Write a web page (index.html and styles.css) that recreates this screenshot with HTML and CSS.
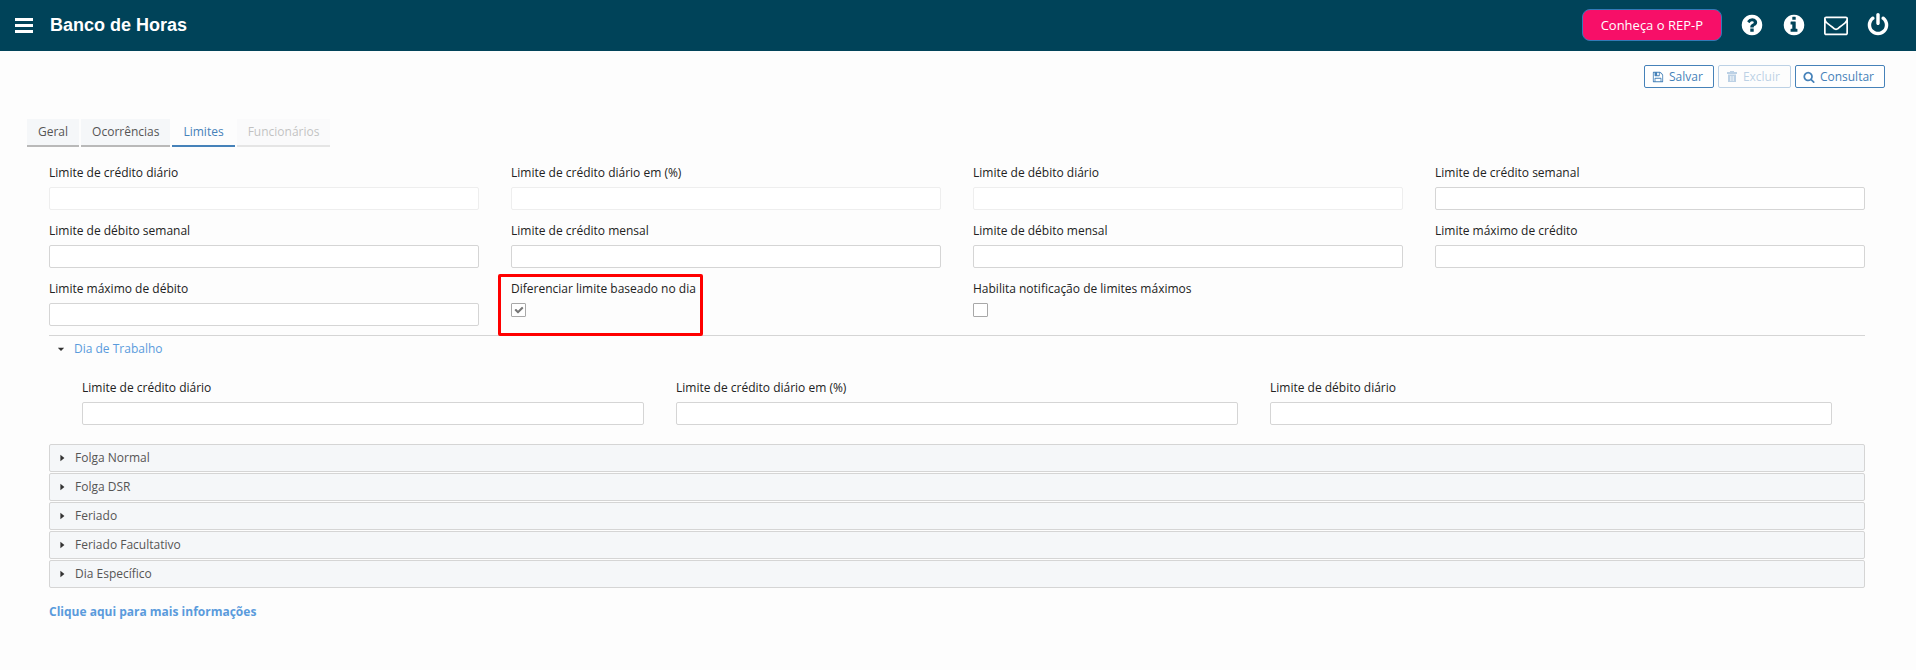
FILE: index.html
```html
<!DOCTYPE html>
<html lang="pt-BR">
<head>
    <meta charset="UTF-8">
    <meta name="viewport" content="width=device-width, initial-scale=1.0">
    <title>Banco de Horas</title>
    <link rel="stylesheet" href="styles.css">
</head>
<body>

    <!-- Header -->
    <header class="topbar">
        <button type="button" class="icon-btn menu-btn" aria-label="Menu">
            <svg class="menu-icon" viewBox="0 0 18 15"><path d="M0 0h18v3H0zM0 6h18v3H0zM0 12h18v3H0z"/></svg>
        </button>
        <h1 class="page-title">Banco de Horas</h1>
        <nav class="topbar-actions">
            <button type="button" class="promo-btn">Conheça o REP-P</button>
            <button type="button" class="icon-btn" aria-label="Ajuda">
                <svg class="icon" viewBox="0 0 1792 1792"><path d="M1024 1376v-192q0-14-9-23t-23-9h-192q-14 0-23 9t-9 23v192q0 14 9 23t23 9h192q14 0 23-9t9-23zm256-672q0-88-55.5-163t-138.5-116-170-41q-243 0-371 213-15 24 8 42l132 100q7 6 19 6 16 0 25-12 53-68 86-92 34-24 86-24 48 0 85.5 26t37.5 59q0 38-20 61t-68 45q-63 28-115.5 86.5t-52.5 125.5v36q0 14 9 23t23 9h192q14 0 23-9t9-23q0-19 21.5-49.5t54.5-49.5q32-18 49-28.5t46-35 44.5-48 28-60.5 12.5-81zm384 192q0 209-103 385.5t-279.5 279.5-385.5 103-385.5-103-279.5-279.5-103-385.5 103-385.5 279.5-279.5 385.5-103 385.5 103 279.5 279.5 103 385.5z"/></svg>
            </button>
            <button type="button" class="icon-btn" aria-label="Informações">
                <svg class="icon" viewBox="0 0 1792 1792"><path d="M1152 1376v-160q0-14-9-23t-23-9h-96v-512q0-14-9-23t-23-9h-320q-14 0-23 9t-9 23v160q0 14 9 23t23 9h96v320h-96q-14 0-23 9t-9 23v160q0 14 9 23t23 9h448q14 0 23-9t9-23zm-128-896v-160q0-14-9-23t-23-9h-192q-14 0-23 9t-9 23v160q0 14 9 23t23 9h192q14 0 23-9t9-23zm640 416q0 209-103 385.5t-279.5 279.5-385.5 103-385.5-103-279.5-279.5-103-385.5 103-385.5 279.5-279.5 385.5-103 385.5 103 279.5 279.5 103 385.5z"/></svg>
            </button>
            <button type="button" class="icon-btn" aria-label="Mensagens">
                <svg class="icon" viewBox="0 0 1792 1792"><path d="M1664 1504v-768q-32 36-69 66-268 206-426 338-51 43-83 67t-86.5 48.5-102.5 24.5h-2q-48 0-102.5-24.5t-86.5-48.5-83-67q-158-132-426-338-37-30-69-66v768q0 13 9.5 22.5t22.5 9.5h1472q13 0 22.5-9.5t9.5-22.5zm0-1051v-24.5l-.5-13-3-12.5-5.5-9-9-7.5-14-2.5h-1472q-13 0-22.5 9.5t-9.5 22.5q0 168 147 284 193 152 401 317 6 5 35 29.5t46 37.5 44.5 31.5 50.5 27.5 43 9h2q20 0 43-9t50.5-27.5 44.5-31.5 46-37.5 35-29.5q208-165 401-317 54-43 100.5-115.5t46.5-131.5zm128-37v1088q0 66-47 113t-113 47h-1472q-66 0-113-47t-47-113v-1088q0-66 47-113t113-47h1472q66 0 113 47t47 113z"/></svg>
            </button>
            <button type="button" class="icon-btn" aria-label="Sair">
                <svg class="icon" viewBox="0 0 1792 1792"><path d="M1664 896q0 156-61 298t-164 245-245 164-298 61-298-61-245-164-164-245-61-298q0-182 80.5-343t226.5-270q43-32 95.5-25t83.5 50q32 42 24.5 94.5t-49.5 84.5q-98 74-151.5 181t-53.5 228q0 104 40.5 198.5t109.5 163.5 163.5 109.5 198.5 40.5 198.5-40.5 163.5-109.5 109.5-163.5 40.5-198.5q0-121-53.5-228t-151.5-181q-42-32-49.5-84.5t24.5-94.5q31-43 84-50t95 25q146 109 226.5 270t80.5 343zm-640-768v640q0 52-38 90t-90 38-90-38-38-90v-640q0-52 38-90t90-38 90 38 38 90z"/></svg>
            </button>
        </nav>
    </header>

    <main class="content">
        <!-- Toolbar -->
        <div class="toolbar">
            <button type="button" class="btn">
                <svg class="btn-icon" viewBox="0 0 1792 1792"><path d="M512 1536h768v-384h-768v384zm896 0h128v-896q0-14-10-38.5t-20-34.5l-281-281q-10-10-34-20t-39-10v416q0 40-28 68t-68 28h-576q-40 0-68-28t-28-68v-416h-128v1280h128v-416q0-40 28-68t68-28h832q40 0 68 28t28 68v416zm-384-928v-320q0-13-9.5-22.5t-22.5-9.5h-192q-13 0-22.5 9.5t-9.5 22.5v320q0 13 9.5 22.5t22.5 9.5h192q13 0 22.5-9.5t9.5-22.5zm640 32v928q0 40-28 68t-68 28h-1344q-40 0-68-28t-28-68v-1344q0-40 28-68t68-28h928q40 0 88 20t76 48l280 280q28 28 48 76t20 88z"/></svg>
                Salvar
            </button>
            <button type="button" class="btn" disabled>
                <svg class="btn-icon" viewBox="0 0 12 12"><path fill-rule="evenodd" d="M4 0h4v1h3v2H1V1h3zM2 3.500h8V11H2zM4 5v5h.6V5zM5.700 5v5h.6V5zM7.400 5v5h.6V5z"/></svg>
                Excluir
            </button>
            <button type="button" class="btn">
                <svg class="btn-icon" viewBox="0 0 1792 1792"><path d="M1216 832q0-185-131.5-316.5t-316.5-131.5-316.5 131.5-131.5 316.5 131.5 316.5 316.5 131.5 316.5-131.5 131.5-316.5zm512 832q0 52-38 90t-90 38q-54 0-90-38l-343-342q-179 124-399 124-143 0-273.5-55.5t-225-150-150-225-55.5-273.5 55.5-273.5 150-225 225-150 273.5-55.5 273.5 55.5 225 150 150 225 55.5 273.5q0 220-124 399l343 343q37 37 37 90z"/></svg>
                Consultar
            </button>
        </div>

        <!-- Tabs -->
        <div class="tabs" role="tablist">
            <button type="button" class="tab" role="tab">Geral</button>
            <button type="button" class="tab" role="tab">Ocorrências</button>
            <button type="button" class="tab active" role="tab" aria-selected="true">Limites</button>
            <button type="button" class="tab" role="tab" disabled>Funcionários</button>
        </div>

        <form class="panel">
            <div class="grid grid-4">
                <div class="field">
                    <label for="credito-diario">Limite de crédito diário</label>
                    <input type="text" id="credito-diario" disabled>
                </div>
                <div class="field">
                    <label for="credito-diario-pct">Limite de crédito diário em (%)</label>
                    <input type="text" id="credito-diario-pct" disabled>
                </div>
                <div class="field">
                    <label for="debito-diario">Limite de débito diário</label>
                    <input type="text" id="debito-diario" disabled>
                </div>
                <div class="field">
                    <label for="credito-semanal">Limite de crédito semanal</label>
                    <input type="text" id="credito-semanal">
                </div>
                <div class="field">
                    <label for="debito-semanal">Limite de débito semanal</label>
                    <input type="text" id="debito-semanal">
                </div>
                <div class="field">
                    <label for="credito-mensal">Limite de crédito mensal</label>
                    <input type="text" id="credito-mensal">
                </div>
                <div class="field">
                    <label for="debito-mensal">Limite de débito mensal</label>
                    <input type="text" id="debito-mensal">
                </div>
                <div class="field">
                    <label for="maximo-credito">Limite máximo de crédito</label>
                    <input type="text" id="maximo-credito">
                </div>
                <div class="field">
                    <label for="maximo-debito">Limite máximo de débito</label>
                    <input type="text" id="maximo-debito">
                </div>
                <div class="field highlight">
                    <label for="diferenciar">Diferenciar limite baseado no dia</label>
                    <input type="checkbox" id="diferenciar" checked>
                </div>
                <div class="field">
                    <label for="notificacao">Habilita notificação de limites máximos</label>
                    <input type="checkbox" id="notificacao">
                </div>
            </div>

            <!-- Accordion -->
            <div class="accordion">
                <details class="accordion-item" open>
                    <summary>Dia de Trabalho</summary>
                    <div class="grid grid-3">
                        <div class="field">
                            <label for="trabalho-credito">Limite de crédito diário</label>
                            <input type="text" id="trabalho-credito">
                        </div>
                        <div class="field">
                            <label for="trabalho-credito-pct">Limite de crédito diário em (%)</label>
                            <input type="text" id="trabalho-credito-pct">
                        </div>
                        <div class="field">
                            <label for="trabalho-debito">Limite de débito diário</label>
                            <input type="text" id="trabalho-debito">
                        </div>
                    </div>
                </details>
                <details class="accordion-item">
                    <summary>Folga Normal</summary>
                </details>
                <details class="accordion-item">
                    <summary>Folga DSR</summary>
                </details>
                <details class="accordion-item">
                    <summary>Feriado</summary>
                </details>
                <details class="accordion-item">
                    <summary>Feriado Facultativo</summary>
                </details>
                <details class="accordion-item">
                    <summary>Dia Específico</summary>
                </details>
            </div>

            <a href="#" class="more-info">Clique aqui para mais informações</a>
        </form>
    </main>

</body>
</html>
```

FILE: styles.css
```css
*,
*::before {
    box-sizing: border-box;
}

body {
    margin: 0;
    font-family: "Open Sans", "Noto Sans", sans-serif;
    font-size: 12px;
    line-height: 16px;
    color: #222;
    background-color: #fdfdfd;
}

button {
    font-family: inherit;
    cursor: pointer;
}

button:disabled {
    cursor: default;
}

/* Header */
.topbar {
    display: flex;
    align-items: center;
    height: 51px;
    padding: 0 26px 1px 15px;
    background-color: #004359;
    color: #fff;
}

.icon-btn {
    display: flex;
    padding: 0;
    border: none;
    background: none;
    color: #fff;
}

.icon {
    width: 24px;
    height: 24px;
    fill: currentColor;
}

.menu-icon {
    width: 18px;
    height: 15px;
    fill: currentColor;
}

.page-title {
    margin: 0 0 0 17px;
    font-family: "Liberation Sans", Arial, sans-serif;
    font-size: 18px;
    line-height: 24px;
    font-weight: bold;
}

.topbar-actions {
    display: flex;
    align-items: center;
    gap: 18px;
    margin-left: auto;
}

.promo-btn {
    height: 32px;
    padding: 0 18px;
    border: 1px solid #337ab7;
    border-radius: 8px;
    background-color: #f70f68;
    color: #fff;
    font-size: 13px;
}

/* Toolbar */
.content {
    padding: 14px 31px 24px 27px;
}

.toolbar {
    display: flex;
    justify-content: flex-end;
    gap: 4px;
}

.btn {
    display: flex;
    align-items: center;
    gap: 5px;
    height: 23px;
    padding: 0 10px 0 7px;
    border: 1px solid #4682b9;
    border-radius: 2px;
    background-color: #fff;
    color: #4682b9;
    font-size: 12px;
}

.btn:disabled {
    opacity: 0.35;
}

.btn-icon {
    width: 12px;
    height: 12px;
    fill: currentColor;
}

/* Tabs */
.tabs {
    display: flex;
    gap: 2px;
    margin-top: 31px;
}

.tab {
    height: 28px;
    padding: 0 11px 2px;
    border: none;
    border-bottom: 2px solid #b9b9b9;
    background-color: #f5f7f9;
    color: #555;
    font-size: 12px;
}

.tab.active {
    border-bottom-color: #4682b9;
    background-color: #fdfdfd;
    color: #4682b9;
}

.tab:disabled {
    opacity: 0.35;
}

/* Form */
.panel {
    padding: 18px 20px 0 22px;
}

.grid {
    display: grid;
    column-gap: 32px;
    row-gap: 13px;
}

.grid-4 {
    grid-template-columns: repeat(4, 1fr);
}

.grid-3 {
    grid-template-columns: repeat(3, 1fr);
    padding: 17px 33px 18px;
}

.field {
    display: flex;
    flex-direction: column;
    align-items: flex-start;
    gap: 6px;
}

input[type="text"] {
    width: 100%;
    height: 23px;
    padding: 0 6px;
    border: 1px solid #d5d5d5;
    border-radius: 2px;
    background-color: #fff;
    font-family: inherit;
    font-size: 12px;
}

input[type="text"]:disabled {
    border-color: #eee;
}

input[type="checkbox"] {
    appearance: none;
    width: 15px;
    height: 14px;
    margin: 0;
    border: 1px solid #a8a8a8;
    border-radius: 1px;
    background: #fff center / 10px 10px no-repeat;
}

input[type="checkbox"]:checked {
    background-image: url("data:image/svg+xml,%3Csvg xmlns='http://www.w3.org/2000/svg' viewBox='0 0 1792 1792'%3E%3Cpath fill='%23777' d='M1671 566q0 40-28 68l-724 724-136 136q-28 28-68 28t-68-28l-136-136-362-362q-28-28-28-68t28-68l136-136q28-28 68-28t68 28l294 295 656-657q28-28 68-28t68 28l136 136q28 28 28 68z'/%3E%3C/svg%3E");
}

/* Red frame around the highlighted option */
.highlight {
    position: relative;
}

.highlight::before {
    content: "";
    position: absolute;
    top: -7px;
    left: -13px;
    width: 205px;
    height: 62px;
    border: 3px solid #f00;
    border-radius: 2px;
    pointer-events: none;
}

/* Accordion */
.accordion {
    display: flex;
    flex-direction: column;
    gap: 1px;
    margin-top: 9px;
}

.accordion-item summary {
    display: flex;
    align-items: center;
    gap: 9px;
    height: 28px;
    padding: 0 8px;
    border: 1px solid #d5d5d5;
    border-radius: 2px;
    background-color: #f5f7f9;
    color: #555;
    cursor: pointer;
    list-style: none;
}

.accordion-item summary::before {
    content: "";
    width: 8px;
    height: 8px;
    background-color: #333;
    clip-path: polygon(30% 10%, 80% 50%, 30% 90%);
}

.accordion-item[open] summary {
    padding-bottom: 1px;
    border-width: 1px 0 0;
    border-radius: 0;
    background: none;
    color: #5a9bdc;
}

.accordion-item[open] summary::before {
    clip-path: polygon(10% 35%, 90% 35%, 50% 75%);
}

.more-info {
    display: inline-block;
    margin-top: 16px;
    color: #5a9bdc;
    font-weight: bold;
    text-decoration: none;
}
```
